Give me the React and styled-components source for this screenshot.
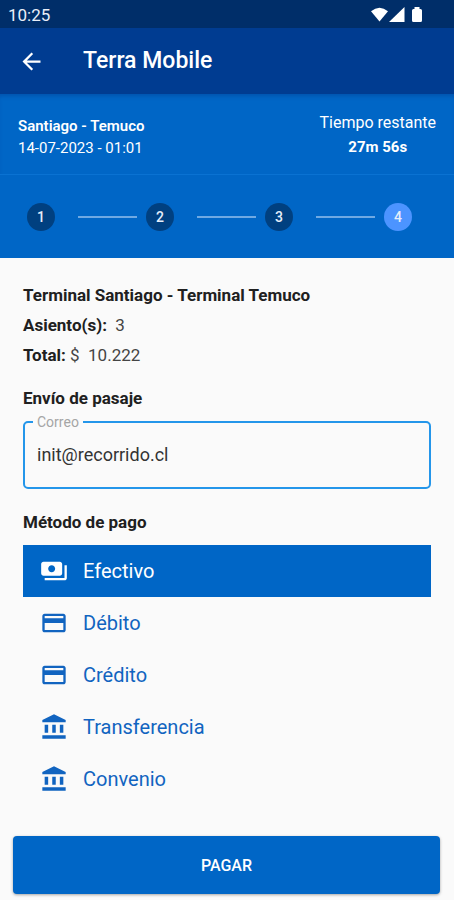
import React, { useState } from 'react'
import styled, { createGlobalStyle } from 'styled-components'
import { MdAccountBalance, MdArrowBack, MdCreditCard, MdPayments } from 'react-icons/md'

const GlobalStyle = createGlobalStyle`
* {
box-sizing: border-box;
}
body {
margin: 0;
background: #fafafa;
color: #202020;
font-family: Roboto, "Liberation Sans", sans-serif;
font-size: 17px;
}
`
const Screen = styled.div`
display: flex;
flex-direction: column;
min-height: 100vh;
`
const StatusBar = styled.div`
display: flex;
align-items: center;
justify-content: space-between;
height: 28px;
padding: 2px 30px 0 8px;
background: #002e69;
color: #e9eef8;
font-size: 17px;
`
const StatusIcons = styled.svg`
display: block;
width: 54px;
height: 18px;
fill: #fff;
`
const AppBar = styled.header`
display: flex;
align-items: center;
gap: 38px;
height: 66px;
padding: 0 18px;
background: #003c91;
color: #fff;
`
const BackButton = styled.button`
display: flex;
padding: 0;
border: 0;
background: none;
color: inherit;
font-size: 27px;
cursor: pointer;
`
const Title = styled.h1`
margin: 0;
font-size: 23px;
font-weight: 500;
line-height: 30px;
`
const Trip = styled.section`
display: flex;
align-items: flex-end;
justify-content: space-between;
padding: 17px 18px 15px;
border-bottom: 1px solid #0a72d2;
background: #0066c6;
box-shadow: inset 0 4px 4px -2px #0053ad;
color: #fff;
`
const TripRoute = styled.div`
display: flex;
flex-direction: column;
line-height: 22px;
`
const TripTimer = styled.div`
display: flex;
flex-direction: column;
line-height: 24px;
text-align: center;
`
const TripText = styled.span`
font-size: ${(props) => (props.$large ? '16px' : '15px')};
font-weight: ${(props) => props.$weight || 400};
`
const Steps = styled.ol`
display: flex;
align-items: center;
height: 83px;
margin: 0;
padding: 0 42px 0 27px;
background: #0066c6;
list-style: none;
`
const Step = styled.li`
display: flex;
align-items: center;
flex: ${(props) => (props.$last ? 'none' : '1')};
&:not(:last-child)::after {
content: "";
flex: 1;
height: 2px;
margin: 0 9px 0 23px;
background: #6fa9e3;
}
`
const StepNumber = styled.span`
display: flex;
align-items: center;
justify-content: center;
width: 28px;
height: 28px;
border-radius: 50%;
background: ${(props) => (props.$active ? '#4c94ff' : '#004080')};
color: #e6eefa;
font-size: 14px;
font-weight: 500;
`
const Content = styled.main`
display: flex;
flex-direction: column;
flex: 1;
padding: 22px 23px 0;
`
const SummaryLine = styled.p`
margin: 0;
line-height: 30px;
white-space: pre-wrap;
color: #444;
strong {
color: #202020;
font-weight: 700;
}
`
const Heading = styled.h2`
margin: 0;
font-size: 17px;
font-weight: 700;
line-height: 24px;
`
const DeliverySection = styled.section`
margin-top: 16px;
`
const PaymentSection = styled.section`
margin-top: 21px;
`
const Field = styled.div`
position: relative;
margin-top: 11px;
`
const FieldLabel = styled.label`
position: absolute;
top: -7px;
left: 10px;
padding: 0 4px;
background: #fafafa;
color: #a5a5a5;
font-size: 14px;
line-height: 16px;
`
const FieldInput = styled.input`
display: block;
width: 100%;
height: 68px;
padding: 0 12px 2px;
border: 2px solid #2496ea;
border-radius: 5px;
outline: none;
background: transparent;
color: #333;
font-family: inherit;
font-size: 18px;
`
const Options = styled.div`
display: flex;
flex-direction: column;
margin-top: 11px;
`
const Option = styled.label`
display: flex;
align-items: center;
gap: 15px;
height: 52px;
padding: 0 17px;
background: ${(props) => (props.$selected ? '#0066c6' : 'transparent')};
color: ${(props) => (props.$selected ? '#fff' : '#1164c0')};
font-size: 20px;
cursor: pointer;
svg {
width: 28px;
height: 28px;
}
`
const OptionRadio = styled.input`
position: absolute;
opacity: 0;
pointer-events: none;
`
const Footer = styled.footer`
padding: 20px 14px 6px 13px;
`
const PayButton = styled.button`
width: 100%;
height: 58px;
border: 0;
border-radius: 4px;
background: #0066c6;
box-shadow: 0 1px 3px rgba(0, 0, 0, 0.35);
color: #fff;
font-family: inherit;
font-size: 16px;
font-weight: 500;
cursor: pointer;
`

const steps = [1, 2, 3, 4]

const methods = [
  { id: 'efectivo', label: 'Efectivo', icon: MdPayments },
  { id: 'debito', label: 'Débito', icon: MdCreditCard },
  { id: 'credito', label: 'Crédito', icon: MdCreditCard },
  { id: 'transferencia', label: 'Transferencia', icon: MdAccountBalance },
  { id: 'convenio', label: 'Convenio', icon: MdAccountBalance },
]

const App = () => {
  const [email, setEmail] = useState('init@recorrido.cl')
  const [method, setMethod] = useState('efectivo')

  return (
    <Screen>
      <GlobalStyle />
      <StatusBar>
        <span>10:25</span>
        <StatusIcons viewBox="0 0 54 18" aria-hidden="true">
          <path d="M1 5.2Q9.5-1.8 18 5.2L9.5 15.5Z" />
          <path d="M19 16L34.5 1V16Z" />
          <path d="M42 4.5Q42 3 43.5 3H44.5V1H49.5V3H50.5Q52 3 52 4.5V14.5Q52 16 50.5 16H43.5Q42 16 42 14.5Z" />
        </StatusIcons>
      </StatusBar>
      <AppBar>
        <BackButton type="button" aria-label="Volver">
          <MdArrowBack />
        </BackButton>
        <Title>Terra Mobile</Title>
      </AppBar>
      <Trip>
        <TripRoute>
          <TripText $weight={600}>Santiago - Temuco</TripText>
          <TripText>14-07-2023 - 01:01</TripText>
        </TripRoute>
        <TripTimer>
          <TripText $large>Tiempo restante</TripText>
          <TripText $weight={700}>27m 56s</TripText>
        </TripTimer>
      </Trip>
      <Steps>
        {steps.map((step) => (
          <Step key={step} $last={step === steps.length}>
            <StepNumber $active={step === 4}>{step}</StepNumber>
          </Step>
        ))}
      </Steps>
      <Content>
        <SummaryLine>
          <strong>Terminal Santiago - Terminal Temuco</strong>
        </SummaryLine>
        <SummaryLine>
          <strong>Asiento(s):</strong>{'  3'}
        </SummaryLine>
        <SummaryLine>
          <strong>Total:</strong>{' $  10.222'}
        </SummaryLine>
        <DeliverySection>
          <Heading>Envío de pasaje</Heading>
          <Field>
            <FieldLabel htmlFor="correo">Correo</FieldLabel>
            <FieldInput
              id="correo"
              type="email"
              value={email}
              onChange={(e) => setEmail(e.target.value)}
            />
          </Field>
        </DeliverySection>
        <PaymentSection>
          <Heading id="metodo">Método de pago</Heading>
          <Options role="radiogroup" aria-labelledby="metodo">
            {methods.map(({ id, label, icon: Icon }) => (
              <Option key={id} $selected={method === id}>
                <OptionRadio
                  type="radio"
                  name="metodo"
                  value={id}
                  checked={method === id}
                  onChange={() => setMethod(id)}
                />
                <Icon aria-hidden="true" />
                {label}
              </Option>
            ))}
          </Options>
        </PaymentSection>
      </Content>
      <Footer>
        <PayButton type="button">PAGAR</PayButton>
      </Footer>
    </Screen>
  )
}

export default App
